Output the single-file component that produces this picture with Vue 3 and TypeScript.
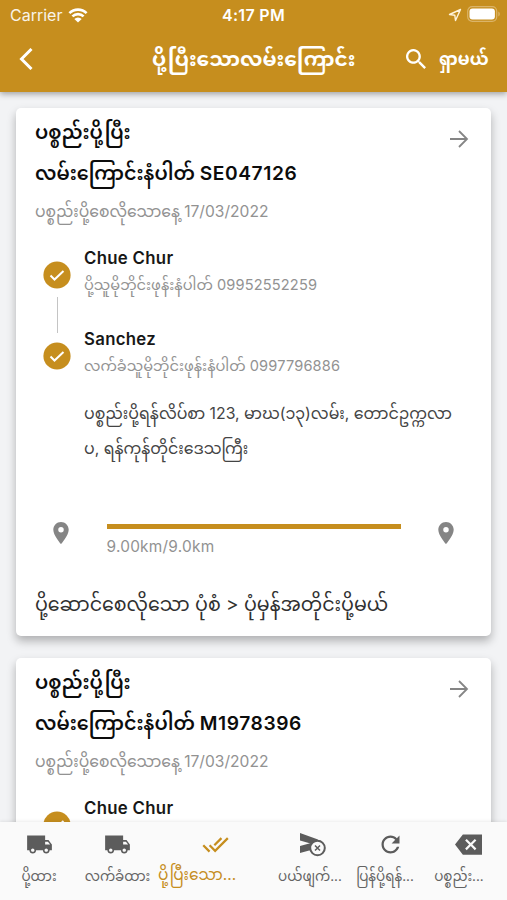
<script setup lang="ts">
interface Parcel {
  id: string
  date: string
  sender: string
  senderPhone: string
  receiver: string
  receiverPhone: string
  address: string
  distance: string
}
interface Tab {
  label: string
  icon: string
  kind: string
}

const parcels: Parcel[] = ['SE047126', 'M1978396'].map((id) => ({
  id,
  date: '17/03/2022',
  sender: 'Chue Chur',
  senderPhone: '09952552259',
  receiver: 'Sanchez',
  receiverPhone: '0997796886',
  address: 'ပစ္စည်းပို့ရန်လိပ်စာ 123, မာဃ(၁၃)လမ်း, တောင်ဥက္ကလာပ, ရန်ကုန်တိုင်းဒေသကြီး',
  distance: '9.00km/9.0km',
}))

const truck =
  'M20 8h-3V4H1v13h2c0 1.660 1.340 3 3 3s3-1.340 3-3h6c0 1.660 1.340 3 3 3s3-1.340 3-3h2v-5l-3-4zM6 18.500c-.83 0-1.500-.67-1.500-1.500s.67-1.500 1.500-1.500 1.500.67 1.500 1.500-.67 1.500-1.500 1.500zm13.500-9l1.960 2.500H17V9.500h2.500zm-1.500 9c-.83 0-1.500-.67-1.500-1.500s.67-1.500 1.500-1.500 1.500.67 1.500 1.500-.67 1.500-1.500 1.500z'

const tabs: Tab[] = [
  { label: 'ပို့ထား', kind: 'send', icon: truck },
  { label: 'လက်ခံထား', kind: 'receive', icon: truck },
  {
    label: 'ပို့ပြီးသော...',
    kind: 'active',
    icon: 'M18 7l-1.410-1.410-6.340 6.340 1.410 1.410L18 7zm4.240-1.410L11.660 16.170 7.480 12l-1.410 1.410L11.660 19l12-12-1.420-1.410zM.41 13.410L6 19l1.410-1.410L1.830 12 .41 13.410z',
  },
  { label: 'ပယ်ဖျက်...', kind: 'cancel', icon: '' },
  {
    label: 'ပြန်ပို့ရန်...',
    kind: 'return',
    icon: 'M17.650 6.350C16.200 4.900 14.210 4 12 4c-4.420 0-7.990 3.580-7.990 8s3.570 8 7.990 8c3.730 0 6.840-2.550 7.730-6h-2.080c-.82 2.330-3.040 4-5.650 4-3.310 0-6-2.690-6-6s2.690-6 6-6c1.660 0 3.140.69 4.220 1.780L13 11h7V4l-2.350 2.350z',
  },
  {
    label: 'ပစ္စည်း...',
    kind: 'remove',
    icon: 'M24 3H7L0 12l7 9h17V3zM19 15.590L17.590 17 14 13.410 10.410 17 9 15.590 12.590 12 9 8.410 10.410 7 14 10.590 17.590 7 19 8.410 15.410 12 19 15.590z',
  },
]
</script>

<template>
  <div class="screen">
    <header class="top">
      <div class="status">
        <span class="carrier">Carrier</span>
        <svg class="wifi" viewBox="0 0 20 15">
          <path d="M1.400 5.200a12.200 12.200 0 0 1 17.200 0M4.400 8.400a8 8 0 0 1 11.200 0" />
          <path class="solid" d="M10 14.600L6.300 10.900a5.300 5.300 0 0 1 7.400 0z" />
        </svg>
        <span class="time">4:17 PM</span>
        <svg class="location" viewBox="0 0 14 14"><path d="M12.500 1.500L1.500 6.500l5.300.7.700 5.300z" /></svg>
        <svg class="battery" viewBox="0 0 34 16">
          <rect class="shell" x=".7" y=".7" width="29" height="14.600" rx="4.500" />
          <rect class="charge" x="2.500" y="2.500" width="25.400" height="11" rx="3" />
          <path class="cap" d="M31.300 5.500v5c2-.8 2-4.200 0-5z" />
        </svg>
      </div>
      <div class="appbar">
        <svg class="back" viewBox="0 0 14 22"><path d="M12.500 1L2.500 11l10 10" /></svg>
        <h1>ပို့ပြီးသောလမ်းကြောင်း</h1>
        <svg class="search" viewBox="3 3 17.500 17.500">
          <path d="M15.500 14h-.79l-.28-.27A6.500 6.500 0 1 0 13.730 14.430l.27.28v.79l5 4.990L20.490 19zm-6 0a4.500 4.500 0 1 1 0-9 4.500 4.500 0 0 1 0 9z" />
        </svg>
        <span class="find">ရှာမယ်</span>
      </div>
    </header>

    <main class="list">
      <article v-for="p in parcels" :key="p.id" class="card">
        <div class="head">
          <div>
            <h2 class="state">ပစ္စည်းပို့ပြီး</h2>
            <h2 class="route">လမ်းကြောင်းနံပါတ် <span class="code">{{ p.id }}</span></h2>
          </div>
          <svg class="arrow" viewBox="0 0 20 20"><path d="M1 10h17M10 2l8 8-8 8" /></svg>
        </div>
        <p class="date">ပစ္စည်းပို့စေလိုသောနေ့ {{ p.date }}</p>
        <div class="steps">
          <div class="rail">
            <svg class="tick" viewBox="0 0 28 28"><circle cx="14" cy="14" r="13.600" /><path d="M7.500 14.500l4 4 9-8.500" /></svg>
            <i class="line"></i>
            <svg class="tick" viewBox="0 0 28 28"><circle cx="14" cy="14" r="13.600" /><path d="M7.500 14.500l4 4 9-8.500" /></svg>
          </div>
          <div class="people">
            <h3>{{ p.sender }}</h3>
            <p class="phone sender">ပို့သူမိုဘိုင်းဖုန်းနံပါတ် <span class="number">{{ p.senderPhone }}</span></p>
            <h3>{{ p.receiver }}</h3>
            <p class="phone">လက်ခံသူမိုဘိုင်းဖုန်းနံပါတ် <span class="number">{{ p.receiverPhone }}</span></p>
            <p class="address">{{ p.address }}</p>
          </div>
        </div>
        <div class="travel">
          <svg class="pin" viewBox="5 2 14 20"><path d="M12 2C8.130 2 5 5.130 5 9c0 5.250 7 13 7 13s7-7.750 7-13c0-3.870-3.130-7-7-7zm0 9.500a2.500 2.500 0 1 1 0-5 2.500 2.500 0 0 1 0 5z" /></svg>
          <div class="progress"><i class="bar"></i><span>{{ p.distance }}</span></div>
          <svg class="pin" viewBox="5 2 14 20"><path d="M12 2C8.130 2 5 5.130 5 9c0 5.250 7 13 7 13s7-7.750 7-13c0-3.870-3.130-7-7-7zm0 9.500a2.500 2.500 0 1 1 0-5 2.500 2.500 0 0 1 0 5z" /></svg>
        </div>
        <p class="method">ပို့ဆောင်စေလိုသော ပုံစံ &gt; ပုံမှန်အတိုင်းပို့မယ်</p>
      </article>
    </main>

    <nav class="tabs">
      <div v-for="t in tabs" :key="t.kind" class="tab" :class="t.kind">
        <svg v-if="t.kind === 'cancel'" class="icon" viewBox="0 0 27 27">
          <path d="M1 2l18 6.500-4 5L1 9.500zM1 15l11-3v7L1 22z" />
          <circle class="ring" cx="18.500" cy="17" r="7.300" />
          <path class="cross" d="M16 14.500l5 5m0-5l-5 5" />
        </svg>
        <svg v-else class="icon" viewBox="0 0 24 24"><path :d="t.icon" /></svg>
        <span>{{ t.label }}</span>
      </div>
    </nav>
  </div>
</template>

<style>
body {
  margin: 0;
  overflow: hidden;
}
</style>

<style scoped>
.screen {
  display: flex;
  flex-direction: column;
  width: 507px;
  height: 900px;
  overflow: hidden;
  background: #f2f3f5;
  color: #171717;
  font-family: Inter, 'Noto Sans Myanmar', 'Noto Sans', sans-serif;
}
h1, h2, h3, p {
  margin: 0;
  white-space: nowrap;
}
svg {
  display: block;
  flex: none;
}
.top {
  flex: none;
  height: 92px;
  background: #c68e1e;
  color: #fff;
  box-shadow: 0 2px 6px rgba(0, 0, 0, 0.35);
  z-index: 1;
}
.status {
  display: grid;
  grid-template-columns: 58px 150px 1fr 14px 34px;
  align-items: center;
  height: 30px;
  padding: 0 11px 0 10px;
}
.carrier {
  font-size: 16px;
  opacity: 0.9;
}
.wifi {
  width: 20px;
  height: 15px;
  fill: none;
  stroke: #fff;
  stroke-width: 2.6;
}
.wifi .solid {
  fill: #fff;
  stroke: none;
}
.time {
  padding-left: 4px;
  font-size: 16px;
  font-weight: 600;
  letter-spacing: 0.3px;
}
.location {
  width: 14px;
  height: 14px;
  fill: none;
  stroke: #fff3d8;
  stroke-width: 1.4;
  stroke-linejoin: round;
}
.battery {
  width: 34px;
  height: 16px;
  margin: -2px 0 0 5px;
}
.shell {
  fill: none;
  stroke: #dbb468;
  stroke-width: 1.2;
}
.charge {
  fill: #fff;
}
.cap {
  fill: #dbb468;
}
.appbar {
  display: grid;
  grid-template-columns: 133px 254px 33px 1fr;
  align-items: center;
  height: 58px;
  padding-left: 19px;
}
.back {
  width: 14px;
  height: 22px;
  fill: none;
  stroke: #fff;
  stroke-width: 3;
}
h1 {
  font-size: 20.2px;
  line-height: 40px;
}
.search {
  width: 20px;
  height: 20px;
  fill: #fff;
}
.find {
  font-size: 17px;
  line-height: 40px;
  font-weight: 700;
  white-space: nowrap;
}
.list {
  flex: 1;
  min-height: 0;
  padding: 16px 16px 0;
  overflow: hidden;
}
.card {
  box-sizing: border-box;
  height: 528px;
  margin-bottom: 22px;
  padding: 5px 18px 0;
  border-radius: 5px;
  background: #fff;
  box-shadow: 0 5px 10px rgba(0, 0, 0, 0.28);
}
.head {
  display: flex;
  justify-content: space-between;
}
h2 {
  height: 40px;
  padding-left: 1px;
  color: #0c0c0c;
  font-size: 19.2px;
  line-height: 41px;
  font-weight: 600;
}
.state {
  line-height: 39px;
}
.code {
  letter-spacing: 0.6px;
}
.arrow {
  width: 20px;
  height: 20px;
  margin: 16px 4px 0 0;
  fill: none;
  stroke: #858585;
  stroke-width: 1.8;
}
.date {
  height: 36px;
  padding-left: 1px;
  color: #929292;
  font-size: 15.6px;
  line-height: 37px;
}
.steps {
  display: flex;
  height: 264px;
}
.rail {
  display: flex;
  flex-direction: column;
  align-items: center;
  width: 28px;
  margin: 32px 13px 0 9px;
}
.tick {
  width: 28px;
  height: 28px;
}
.tick circle {
  fill: #c68e1e;
}
.tick path {
  fill: none;
  stroke: #fff;
  stroke-width: 2;
}
.line {
  width: 1px;
  height: 36px;
  margin: 8px 0 9px;
  background: #c4c4c4;
}
.people {
  padding-top: 15px;
}
h3 {
  height: 27px;
  font-size: 16.8px;
  line-height: 29px;
  font-weight: 600;
  letter-spacing: 0.3px;
}
.phone {
  height: 27px;
  color: #929292;
  font-size: 14.6px;
  line-height: 29px;
}
.number {
  letter-spacing: 0.15px;
}
.sender {
  margin-bottom: 27px;
}
.address {
  width: 373px;
  margin-top: 17px;
  color: #444;
  font-size: 15.8px;
  line-height: 35px;
  white-space: normal;
}
.travel {
  display: flex;
  justify-content: space-between;
  height: 92px;
  padding: 29px 19px 0;
  box-sizing: border-box;
}
.pin {
  width: 16px;
  height: 22px;
  fill: #858585;
}
.progress {
  width: 294px;
  margin: 2px 15px 0;
  color: #929292;
  font-size: 15.4px;
  letter-spacing: 0.25px;
}
.bar {
  display: block;
  height: 5px;
  background: #c68e1e;
}
.progress span {
  display: block;
  line-height: 35px;
}
.method {
  padding-left: 1px;
  color: #303030;
  font-size: 19px;
  line-height: 40px;
}
.tabs {
  display: grid;
  grid-template-columns: 78px 79px 116px 78px 78px 78px;
  flex: none;
  height: 78px;
  background: #fafafa;
  box-shadow: 0 -1px 3px rgba(0, 0, 0, 0.08);
  color: #636363;
  z-index: 1;
}
.tab {
  display: flex;
  flex-direction: column;
  align-items: center;
  padding-top: 9px;
  font-size: 13.5px;
  white-space: nowrap;
}
.icon {
  width: 27px;
  height: 27px;
  fill: #5c5c5c;
}
.tab span {
  line-height: 36px;
}
.ring {
  fill: #fafafa;
  stroke: #5c5c5c;
  stroke-width: 2;
}
.cross {
  stroke: #5c5c5c;
  stroke-width: 1.5;
}
.cancel span {
  margin-right: 4px;
}
.return span {
  margin-right: 10px;
}
.remove span {
  margin-right: 18px;
}
.active {
  color: #c68e1e;
}
.active span {
  margin-right: 36px;
  font-size: 15.4px;
  line-height: 33px;
}
.active .icon {
  fill: #c68e1e;
}
</style>
